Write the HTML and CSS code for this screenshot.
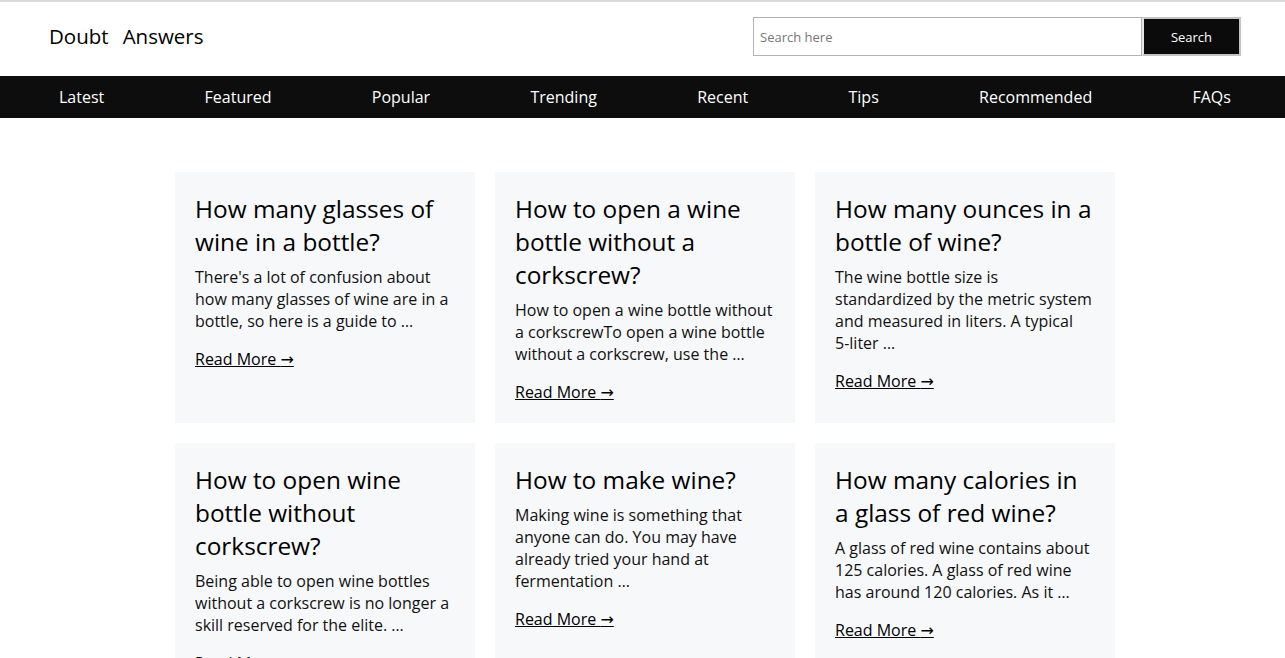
FILE: index.html
```html
<!DOCTYPE html>
<html lang="en">
<head>
<meta charset="utf-8">
<title>Doubt Answers</title>
<link rel="stylesheet" href="styles.css">
</head>
<body>
<header class="site-header">
  <a class="logo" href="#"><span>Doubt</span><span class="logo-second">Answers</span></a>
  <form class="search">
    <input class="search-input" type="text" placeholder="Search here">
    <button class="search-btn" type="button">Search</button>
  </form>
</header>
<nav class="main-nav">
  <a href="#">Latest</a>
  <a href="#">Featured</a>
  <a href="#">Popular</a>
  <a href="#">Trending</a>
  <a href="#">Recent</a>
  <a href="#">Tips</a>
  <a href="#">Recommended</a>
  <a href="#">FAQs</a>
</nav>
<main class="cards">
  <article class="card">
    <h2 class="card-title">How many glasses of wine in a bottle?</h2>
    <p class="card-text">There's a lot of confusion about how many glasses of wine are in a bottle, so here is a guide to …</p>
    <a class="read-more" href="#">Read More <span class="arrow">→</span></a>
  </article>
  <article class="card">
    <h2 class="card-title">How to open a wine bottle without a corkscrew?</h2>
    <p class="card-text">How to open a wine bottle without a corkscrewTo open a wine bottle without a corkscrew, use the …</p>
    <a class="read-more" href="#">Read More <span class="arrow">→</span></a>
  </article>
  <article class="card">
    <h2 class="card-title">How many ounces in a bottle of wine?</h2>
    <p class="card-text">The wine bottle size is standardized by the metric system and measured in liters. A typical <span class="nowrap">5-liter</span> …</p>
    <a class="read-more" href="#">Read More <span class="arrow">→</span></a>
  </article>
  <article class="card">
    <h2 class="card-title">How to open wine bottle without corkscrew?</h2>
    <p class="card-text">Being able to open wine bottles without a corkscrew is no longer a skill reserved for the elite. …</p>
    <a class="read-more" href="#">Read More <span class="arrow">→</span></a>
  </article>
  <article class="card">
    <h2 class="card-title">How to make wine?</h2>
    <p class="card-text">Making wine is something that anyone can do. You may have already tried your hand at fermentation …</p>
    <a class="read-more" href="#">Read More <span class="arrow">→</span></a>
  </article>
  <article class="card">
    <h2 class="card-title">How many calories in a glass of red wine?</h2>
    <p class="card-text">A glass of red wine contains about 125 calories. A glass of red wine has around 120 calories. As it …</p>
    <a class="read-more" href="#">Read More <span class="arrow">→</span></a>
  </article>
</main>
</body>
</html>
```

FILE: styles.css
```css
* { box-sizing: border-box; }

html, body {
  margin: 0;
  padding: 0;
}

body {
  font-family: "Open Sans", "Liberation Sans", sans-serif;
  color: #111;
  background: #fff;
  border-top: 2px solid #d9d9d9;
}

.site-header {
  height: 74px;
  display: flex;
  align-items: flex-start;
  justify-content: space-between;
  padding: 15px 44px 0 49px;
}

.logo {
  font-size: 20.5px;
  color: #000;
  text-decoration: none;
  margin-top: 5px;
}

.logo-second {
  margin-left: 14px;
}

.search {
  display: flex;
  margin: 0;
}

.search-input {
  width: 389px;
  height: 39px;
  border: 1px solid #b3b3b3;
  padding: 0 6px;
  font-family: "Open Sans", "Liberation Sans", sans-serif;
  font-size: 13px;
  color: #333;
  outline: none;
}

.search-input::placeholder {
  color: #777;
}

.search-btn {
  width: 99px;
  height: 39px;
  background: #0b0b0b;
  color: #fff;
  border: 2px solid #c4c4c4;
  border-left-color: #e6e6e6;
  font-family: "Open Sans", "Liberation Sans", sans-serif;
  font-size: 13px;
  padding: 0;
}

.main-nav {
  height: 42px;
  background: #0d0d0d;
  display: flex;
  align-items: center;
  justify-content: space-between;
  padding: 0 54px 0 59px;
}

.main-nav a {
  color: #fff;
  text-decoration: none;
  font-size: 16px;
}

.cards {
  display: grid;
  grid-template-columns: repeat(3, 300px);
  gap: 20px;
  justify-content: center;
  padding: 54px 0 0 5px;
}

.card {
  background: #f7f8fa;
  padding: 20px 20px 20px;
}

.card-title {
  font-size: 24.4px;
  font-weight: 400;
  margin: 0 0 8px;
  line-height: 33px;
  color: #000;
}

.card-text {
  font-size: 16px;
  margin: 0 0 16px;
  line-height: 22px;
  color: #111;
}

.nowrap {
  white-space: nowrap;
}

.read-more {
  display: inline-block;
  font-size: 16px;
  line-height: 22px;
  color: #000;
  text-decoration: underline;
}

.arrow {
  font-family: "Noto Sans", "DejaVu Sans", sans-serif;
}
```
